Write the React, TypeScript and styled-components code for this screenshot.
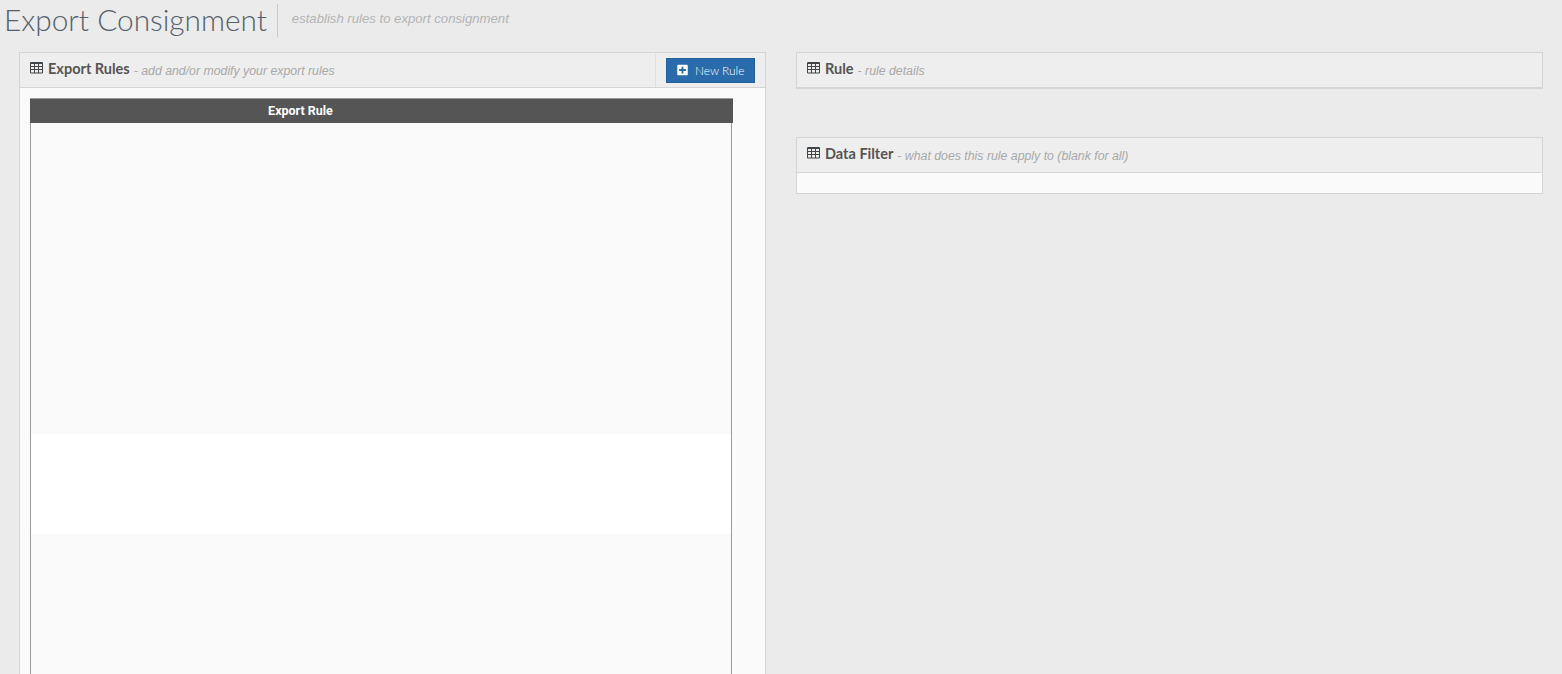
import React from 'react';
import styled, { createGlobalStyle } from 'styled-components';
import { FaPlusSquare } from 'react-icons/fa';

const GlobalStyle = createGlobalStyle`
  html, body {
    margin: 0;
    padding: 0;
    height: 100%;
    overflow: hidden;
    background: #ebebeb;
    font-family: Lato, "Liberation Sans", sans-serif;
  }
`;

const Page = styled.div`
  height: 674px;
  overflow: hidden;
  background: #ebebeb;
`;

const PageHeader = styled.div`
  display: flex;
  align-items: flex-start;
  height: 52px;
  padding-left: 4px;
  box-sizing: border-box;
`;

const PageTitle = styled.h1`
  margin: 4px 0 0;
  padding-right: 10px;
  height: 33px;
  border-right: 1px solid #c8c8c8;
  font-family: Lato, sans-serif;
  font-weight: 300;
  font-size: 29.8px;
  line-height: 32px;
  color: #56606a;
  white-space: nowrap;
`;

const PageSubtitle = styled.span`
  margin: 11px 0 0 14px;
  font-family: "Liberation Sans", Arial, sans-serif;
  font-style: italic;
  font-size: 13.15px;
  line-height: 15px;
  color: #b4b4b4;
`;

const Columns = styled.div`
  display: grid;
  grid-template-columns: 747px 747px;
  column-gap: 30px;
  padding-left: 19px;
  align-items: start;
`;

const RightColumn = styled.div`
  display: flex;
  flex-direction: column;
  gap: 48px;
`;

const Widget = styled.section`
  box-sizing: border-box;
  border: 1px solid #d5d5d5;
  background: #fafafa;
`;

const WidgetHeader = styled.header`
  display: flex;
  align-items: stretch;
  box-sizing: border-box;
  height: 35px;
  background: #eeeeee;
  border-bottom: 1px solid #d5d5d5;
`;

const WidgetTitle = styled.div`
  flex: 1;
  display: flex;
  align-items: center;
  padding-left: 10px;
  white-space: nowrap;
`;

const TableIcon = styled.svg`
  width: 14px;
  height: 12px;
  margin: -5px 4px 0 0;
  flex: none;
`;

const TitleText = styled.strong`
  margin-bottom: 3px;
  font-family: Lato, sans-serif;
  font-weight: 700;
  font-size: 14.5px;
  color: #555555;
`;

const TitleNote = styled.small`
  margin: 1px 0 0 4px;
  font-family: "Liberation Sans", Arial, sans-serif;
  font-style: italic;
  font-size: 12.3px;
  color: #a8a8a8;
`;

const Toolbar = styled.div`
  display: flex;
  align-items: center;
  padding: 0 10px;
  border-left: 1px solid #e0e0e0;
`;

const NewRuleButton = styled.button`
  display: flex;
  align-items: center;
  gap: 7px;
  box-sizing: border-box;
  height: 25px;
  width: 89px;
  padding: 0 0 0 10px;
  border: 1px solid #23609a;
  border-radius: 0;
  background: #2a6cab;
  color: #ffffff;
  font-family: Lato, sans-serif;
  font-weight: 300;
  font-size: 11.9px;
  svg {
    width: 11px;
    height: 12px;
    color: #ffffff;
    flex: none;
  }
`;

const RulesBody = styled.div`
  padding: 10px 10px 0;
  height: 600px;
  overflow: hidden;
`;

const RulesTable = styled.table`
  display: block;
  width: 703px;
  border-collapse: collapse;
`;

const TableHead = styled.thead`
  display: block;
`;

const HeadRow = styled.tr`
  display: block;
`;

const HeaderCell = styled.th`
  display: block;
  box-sizing: border-box;
  width: 703px;
  height: 25px;
  padding-right: 163px;
  border-top: 1px solid #9a9a9a;
  background: #555555;
  color: #ffffff;
  font-family: Roboto, sans-serif;
  font-weight: 700;
  font-size: 12.5px;
  line-height: 22px;
  text-align: center;
`;

const TableBody = styled.tbody`
  display: block;
  box-sizing: border-box;
  width: 702px;
  border-left: 1px solid #999999;
  border-right: 1px solid #999999;
`;

const Row = styled.tr<{ $height: number; $striped?: boolean }>`
  display: block;
  height: ${(p) => p.$height}px;
  background: ${(p) => (p.$striped ? '#f9f9f9' : '#ffffff')};
`;

const FilterBody = styled.div`
  height: 20px;
`;

const GridIcon = () => (
  <TableIcon viewBox="0 0 14 12">
    <path
      fill="none"
      stroke="#3f4548"
      strokeWidth="1"
      d="M.5.5h12v10.5H.5zM.5 1.5h12M.5 4.5h12M.5 7.5h12M4.5 1.5V11M8.5 1.5V11"
    />
  </TableIcon>
);

const App = () => (
  <>
    <GlobalStyle />
    <Page>
      <PageHeader>
        <PageTitle>Export Consignment</PageTitle>
        <PageSubtitle>establish rules to export consignment</PageSubtitle>
      </PageHeader>
      <Columns>
        <Widget>
          <WidgetHeader>
            <WidgetTitle>
              <GridIcon />
              <TitleText>Export Rules</TitleText>
              <TitleNote>- add and/or modify your export rules</TitleNote>
            </WidgetTitle>
            <Toolbar>
              <NewRuleButton>
                <FaPlusSquare />
                New Rule
              </NewRuleButton>
            </Toolbar>
          </WidgetHeader>
          <RulesBody>
            <RulesTable>
              <TableHead>
                <HeadRow>
                  <HeaderCell>Export Rule</HeaderCell>
                </HeadRow>
              </TableHead>
              <TableBody>
                <Row $height={311} $striped />
                <Row $height={100} />
                <Row $height={300} $striped />
              </TableBody>
            </RulesTable>
          </RulesBody>
        </Widget>
        <RightColumn>
          <Widget>
            <WidgetHeader>
              <WidgetTitle>
                <GridIcon />
                <TitleText>Rule</TitleText>
                <TitleNote>- rule details</TitleNote>
              </WidgetTitle>
            </WidgetHeader>
          </Widget>
          <Widget>
            <WidgetHeader>
              <WidgetTitle>
                <GridIcon />
                <TitleText>Data Filter</TitleText>
                <TitleNote>- what does this rule apply to (blank for all)</TitleNote>
              </WidgetTitle>
            </WidgetHeader>
            <FilterBody />
          </Widget>
        </RightColumn>
      </Columns>
    </Page>
  </>
);

export default App;
